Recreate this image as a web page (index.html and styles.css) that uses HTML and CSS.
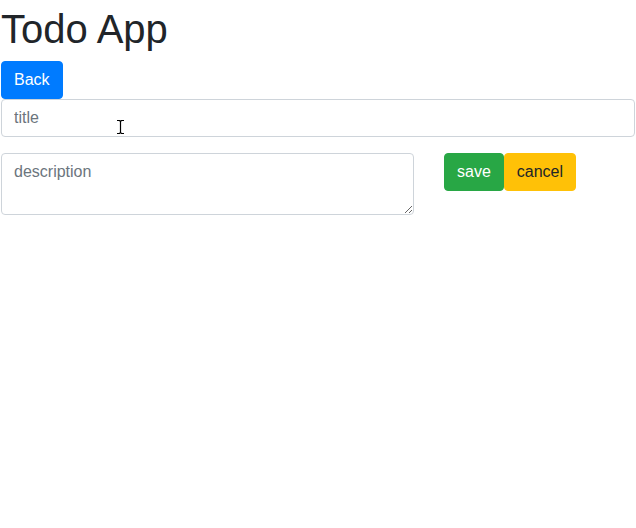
FILE: index.html
```html
<!DOCTYPE html>
<html>
<head>
<meta charset="utf-8">
<link rel="stylesheet" href="styles.css">
</head>
<body>
<div class="app">
  <h1 class="title">Todo App</h1>
  <button class="btn btn-primary">Back</button>
  <form class="form">
    <div class="form-group">
      <input class="form-control" type="text" placeholder="title">
    </div>
    <div class="row">
      <textarea class="form-control desc" rows="2" placeholder="description"></textarea>
      <div class="actions">
        <button type="button" class="btn btn-success">save</button>
        <button type="button" class="btn btn-warning">cancel</button>
      </div>
    </div>
  </form>
  <svg class="cursor" width="9" height="16" viewBox="0 0 9 16"><path d="M1 1.5h2.5l1 1 1-1H8M4.5 2.5v11M1 14.5h2.5l1-1 1 1H8" fill="none" stroke="#000" stroke-width="1.2"/></svg>
</div>
</body>
</html>
```
FILE: styles.css
```css
* { box-sizing: border-box; }
body {
  margin: 0;
  font-family: "Liberation Sans", Arial, sans-serif;
  font-size: 16px;
  line-height: 1.5;
  color: #212529;
  background: #fff;
}
.app {
  position: relative;
  padding: 0 1px;
}
.title {
  margin: 5px 0 8px 0;
  font-size: 40px;
  font-weight: 400;
  line-height: 1.2;
}
.btn {
  display: inline-block;
  font-family: inherit;
  font-size: 16px;
  line-height: 1.5;
  padding: 6px 12px;
  border: 1px solid transparent;
  border-radius: 4px;
  cursor: pointer;
}
.btn-primary { background: #007bff; border-color: #007bff; color: #fff; }
.btn-success { background: #28a745; border-color: #28a745; color: #fff; }
.btn-warning { background: #ffc107; border-color: #ffc107; color: #212529; }
.form { margin: 0; }
.form-group { margin-bottom: 16px; }
.form-control {
  display: block;
  width: 100%;
  height: 38px;
  padding: 6px 12px;
  font-family: inherit;
  font-size: 16px;
  line-height: 1.5;
  color: #495057;
  background: #fff;
  border: 1px solid #ced4da;
  border-radius: 4px;
}
.form-control::placeholder { color: #6c757d; opacity: 1; }
.row {
  display: flex;
  align-items: flex-start;
  gap: 30px;
}
.desc {
  width: 413px;
  height: 62px;
  flex: none;
}
.actions { display: flex; }
.cursor {
  position: absolute;
  left: 116px;
  top: 114px;
}
```
